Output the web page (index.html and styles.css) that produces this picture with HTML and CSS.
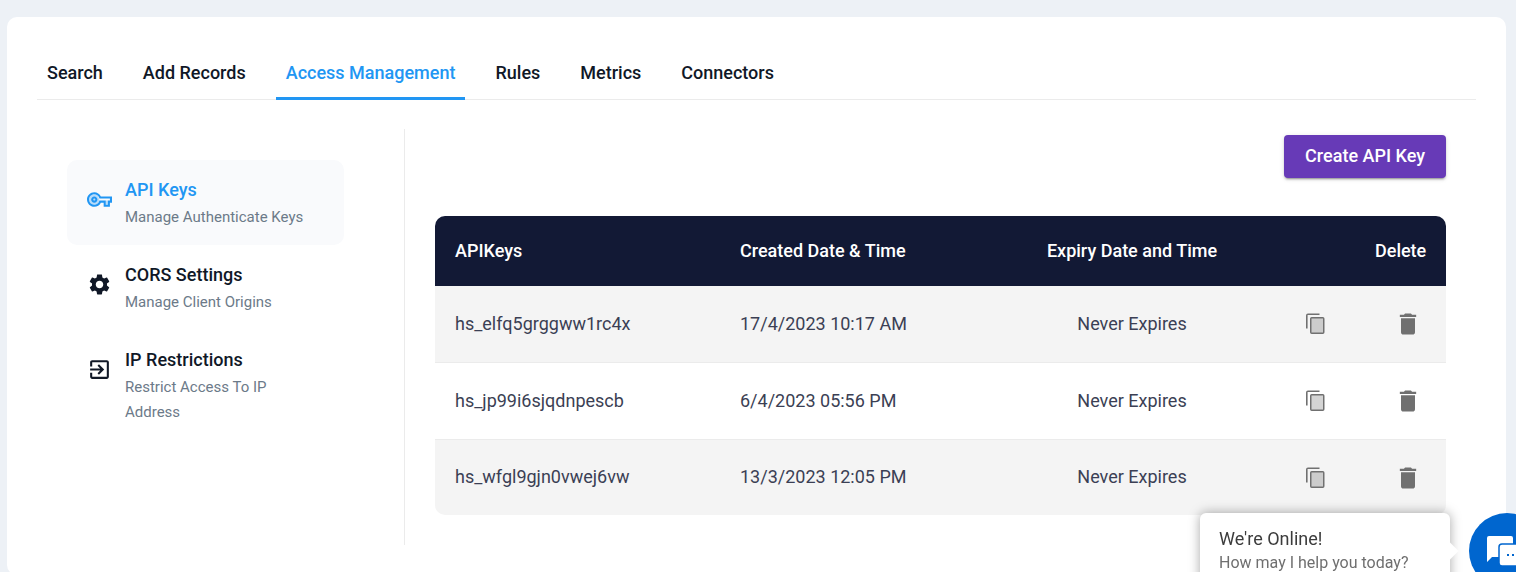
FILE: index.html
```html
<!DOCTYPE html>
<html lang="en">
<head>
	<meta charset="utf-8" />
	<title>Access Management</title>
	<link rel="stylesheet" href="styles.css">
</head>
<body>

<svg class="sprite" aria-hidden="true">
	<symbol id="icon-copy" viewBox="0 0 24 24">
		<path opacity=".3" d="M7 6h13v15H7z"/>
		<path d="M15.500 1.500H4a2 2 0 0 0-2 2V16.500h1.600V3.100h11.900zM18.800 5H7.700A1.700 1.700 0 0 0 6 6.700v13.600A1.700 1.700 0 0 0 7.700 22h11.100a1.700 1.700 0 0 0 1.700-1.700V6.700A1.700 1.700 0 0 0 18.800 5zm.2 15.500H7.500v-14H19z"/>
	</symbol>
	<symbol id="icon-trash" viewBox="0 0 24 24">
		<path d="M6 19c0 1.100.9 2 2 2h8c1.100 0 2-.9 2-2V7H6v12zM19 4h-3.500l-1-1h-5l-1 1H5v2h14V4z"/>
	</symbol>
</svg>

<div class="card">
	<nav class="tabs">
		<a href="#" class="tab">Search</a>
		<a href="#" class="tab">Add Records</a>
		<a href="#" class="tab active">Access Management</a>
		<a href="#" class="tab">Rules</a>
		<a href="#" class="tab">Metrics</a>
		<a href="#" class="tab">Connectors</a>
	</nav>

	<div class="content">
		<nav class="side">
			<a href="#" class="side-item active">
				<svg class="side-icon" viewBox="0 0 24 24" aria-hidden="true">
					<path opacity=".3" d="M22 13H11.940l-.23-.67C11.010 8.340 9.110 7 7 7c-2.760 0-5 2.240-5 5s2.240 5 5 5c2.110 0 4.010-1.340 4.710-3.330l.23-.67H18v4h2v-4h2z"/>
					<path d="M22 19h-6v-4h-2.680c-1.140 2.420-3.600 4-6.320 4-3.860 0-7-3.140-7-7s3.140-7 7-7c2.720 0 5.170 1.580 6.320 4H24v6h-2v4zm-4-2h2v-4h2v-2H11.940l-.23-.67C11.010 8.340 9.110 7 7 7c-2.760 0-5 2.240-5 5s2.240 5 5 5c2.110 0 4.010-1.340 4.710-3.330l.23-.67H18v4zM7 15c-1.650 0-3-1.350-3-3s1.350-3 3-3 3 1.350 3 3-1.350 3-3 3zm0-4c-.55 0-1 .45-1 1s.45 1 1 1 1-.45 1-1-.45-1-1-1z"/>
				</svg>
				<span class="side-text">
					<span class="side-title">API Keys</span>
					<span class="side-sub">Manage Authenticate Keys</span>
				</span>
			</a>
			<a href="#" class="side-item">
				<svg class="side-icon" viewBox="0 0 24 24" aria-hidden="true">
					<path d="M19.140 12.940c.04-.3.060-.61.060-.94 0-.32-.02-.64-.07-.94l2.030-1.580c.18-.14.230-.41.120-.61l-1.920-3.320c-.12-.22-.37-.29-.59-.22l-2.390.96c-.5-.38-1.030-.7-1.620-.94l-.36-2.540c-.04-.24-.24-.41-.48-.41h-3.840c-.24 0-.43.170-.47.410l-.36 2.540c-.59.240-1.130.570-1.620.940l-2.390-.96c-.22-.08-.47 0-.59.220L2.740 8.870c-.12.210-.08.470.12.610l2.030 1.580c-.05.3-.09.630-.09.940s.02.640.070.940l-2.030 1.580c-.18.140-.23.410-.12.610l1.920 3.320c.12.220.37.290.59.220l2.390-.96c.5.380 1.030.7 1.620.940l.36 2.540c.05.240.24.410.48.410h3.840c.24 0 .44-.17.470-.41l.36-2.540c.59-.24 1.130-.56 1.620-.94l2.390.96c.22.080.47 0 .59-.22l1.920-3.320c.12-.22.070-.47-.12-.61l-2.010-1.580zM12 15.600c-1.980 0-3.600-1.620-3.600-3.600s1.620-3.600 3.600-3.600 3.600 1.620 3.600 3.600-1.620 3.600-3.600 3.600z"/>
				</svg>
				<span class="side-text">
					<span class="side-title">CORS Settings</span>
					<span class="side-sub">Manage Client Origins</span>
				</span>
			</a>
			<a href="#" class="side-item">
				<svg class="side-icon" viewBox="0 0 24 24" aria-hidden="true">
					<path d="M10.090 15.590L11.500 17l5-5-5-5-1.410 1.410L12.670 11H3v2h9.670l-2.580 2.590zM19 3H5c-1.110 0-2 .9-2 2v4h2V5h14v14H5v-4H3v4c0 1.100.89 2 2 2h14c1.100 0 2-.9 2-2V5c0-1.100-.9-2-2-2z"/>
				</svg>
				<span class="side-text">
					<span class="side-title">IP Restrictions</span>
					<span class="side-sub">Restrict Access To IP Address</span>
				</span>
			</a>
		</nav>

		<main class="main">
			<button type="button" class="create-btn">Create API Key</button>

			<table class="keys">
				<colgroup>
					<col class="col-key">
					<col>
					<col class="col-expiry">
					<col class="col-copy">
					<col class="col-delete">
				</colgroup>
				<thead>
					<tr>
						<th>APIKeys</th>
						<th>Created Date &amp; Time</th>
						<th class="center">Expiry Date and Time</th>
						<th></th>
						<th>Delete</th>
					</tr>
				</thead>
				<tbody>
					<tr>
						<td>hs_elfq5grggww1rc4x</td>
						<td>17/4/2023 10:17 AM</td>
						<td class="center">Never Expires</td>
						<td class="copy"><button type="button" class="icon-btn" aria-label="Copy"><svg class="icon-copy"><use href="#icon-copy"/></svg></button></td>
						<td class="delete"><button type="button" class="icon-btn" aria-label="Delete"><svg class="icon-trash"><use href="#icon-trash"/></svg></button></td>
					</tr>
					<tr>
						<td>hs_jp99i6sjqdnpescb</td>
						<td>6/4/2023 05:56 PM</td>
						<td class="center">Never Expires</td>
						<td class="copy"><button type="button" class="icon-btn" aria-label="Copy"><svg class="icon-copy"><use href="#icon-copy"/></svg></button></td>
						<td class="delete"><button type="button" class="icon-btn" aria-label="Delete"><svg class="icon-trash"><use href="#icon-trash"/></svg></button></td>
					</tr>
					<tr>
						<td>hs_wfgl9gjn0vwej6vw</td>
						<td>13/3/2023 12:05 PM</td>
						<td class="center">Never Expires</td>
						<td class="copy"><button type="button" class="icon-btn" aria-label="Copy"><svg class="icon-copy"><use href="#icon-copy"/></svg></button></td>
						<td class="delete"><button type="button" class="icon-btn" aria-label="Delete"><svg class="icon-trash"><use href="#icon-trash"/></svg></button></td>
					</tr>
				</tbody>
			</table>
		</main>
	</div>
</div>

<!-- chat widget -->
<div class="chat">
	<div class="chat-bubble">
		<div class="chat-title">We're Online!</div>
		<div class="chat-sub">How may I help you today?</div>
	</div>
	<button type="button" class="chat-btn" aria-label="Open chat">
		<svg viewBox="0 0 76 76" aria-hidden="true">
			<path fill="#fff" d="M20 23h22a2 2 0 0 1 2 2v19H23l-5 5V25a2 2 0 0 1 2-2z"/>
			<path fill="#fff" stroke="#0066cf" stroke-width="1.5" d="M33 31h23a3 3 0 0 1 3 3v24l-6-5H33a3 3 0 0 1-3-3V34a3 3 0 0 1 3-3z"/>
			<path fill="#0066cf" d="M38 41h2v2h-2zM43 41h2v2h-2zM48 41h2v2h-2z"/>
		</svg>
	</button>
</div>

</body>
</html>
```
FILE: styles.css
```css
* {
	box-sizing: border-box;
	margin: 0;
	padding: 0;
}
body {
	min-height: 100vh;
	overflow: hidden;
	background: #edf1f6;
	font-family: Roboto, "Liberation Sans", sans-serif;
	font-size: 18px;
	color: #101827;
}
a {
	color: inherit;
	text-decoration: none;
}
button {
	border: 0;
	font-family: inherit;
	cursor: pointer;
}
.sprite {
	display: none;
}
.card {
	margin: 17px 10px 0 7px;
	padding: 30px;
	background: #fff;
	border-radius: 10px;
}

/* top tabs */
.tabs {
	display: flex;
	gap: 20px;
	height: 53px;
	border-bottom: 1px solid #ebebeb;
}
.tab {
	height: 53px;
	padding: 0 10px;
	line-height: 52px;
	font-weight: 500;
	border-bottom: 3px solid transparent;
}
.tab.active {
	color: #2196f3;
	border-bottom-color: #2196f3;
}

.content {
	display: flex;
	margin-top: 29px;
}

/* left menu */
.side {
	flex: 0 0 368px;
	min-height: 416px;
	padding: 31px 60px 30px 30px;
	border-right: 1px solid #ebebeb;
}
.side-item {
	display: flex;
	gap: 13px;
	padding: 16px 20px 15px;
	border-radius: 10px;
}
.side-item.active {
	background: #f9fafc;
}
.side-icon {
	flex: none;
	width: 25px;
	height: 25px;
	margin-top: 11px;
	fill: currentColor;
}
.side-title {
	display: block;
	line-height: 28px;
	font-weight: 500;
}
.side-sub {
	display: block;
	margin-top: 1px;
	line-height: 25px;
	font-size: 15px;
	color: #6c7a89;
}
.active .side-icon,
.active .side-title {
	color: #2196f3;
}

/* keys table */
.main {
	flex: 1;
	padding: 6px 30px 30px;
}
.create-btn {
	display: block;
	height: 43px;
	margin: 0 0 38px auto;
	padding: 0 21px 2px;
	border-radius: 4px;
	background: #673ab7;
	color: #fff;
	font-size: 18px;
	font-weight: 500;
	box-shadow: 0 3px 1px -2px rgba(0,0,0,.2), 0 2px 2px rgba(0,0,0,.14), 0 1px 5px rgba(0,0,0,.12);
}
.keys {
	width: 100%;
	table-layout: fixed;
	border-spacing: 0;
	border-radius: 10px;
	overflow: hidden;
}
.col-key {
	width: 285px;
}
.col-expiry {
	width: 290px;
}
.col-copy {
	width: 78px;
}
.col-delete {
	width: 91px;
}
.keys th {
	height: 70px;
	padding: 0 20px 2px;
	background: #121935;
	color: #fff;
	font-weight: 500;
	text-align: left;
}
.keys td {
	height: 77px;
	padding: 0 20px 2px;
	border-bottom: 1px solid #ebebeb;
	color: #3b3f54;
}
.keys tbody tr:nth-child(odd) {
	background: #f4f4f4;
}
.keys tbody tr:last-child td {
	height: 75px;
	border-bottom: 0;
}
.keys .center {
	text-align: center;
}
.keys .copy {
	padding: 0;
	text-align: center;
}
.keys .delete {
	padding: 0 24px 0 0;
	text-align: right;
}
.icon-btn {
	background: none;
	color: #707070;
	vertical-align: middle;
}
.icon-btn svg {
	display: block;
	fill: currentColor;
}
.icon-copy {
	width: 24px;
	height: 24px;
}
.icon-trash {
	width: 28px;
	height: 28px;
}

/* chat */
.chat {
	position: fixed;
	right: -29px;
	bottom: -17px;
	display: flex;
	gap: 19px;
}
.chat-bubble {
	position: relative;
	width: 250px;
	height: 76px;
	padding: 14px 19px;
	border-radius: 6px;
	background: #fff;
	box-shadow: 0 0 12px rgba(0,0,0,.35);
	line-height: 24px;
}
.chat-bubble:after {
	content: "";
	position: absolute;
	top: 32px;
	right: -6px;
	width: 12px;
	height: 12px;
	background: #fff;
	transform: rotate(45deg);
}
.chat-title {
	color: #3c3c3c;
}
.chat-sub {
	font-size: 16px;
	color: #6f6f6f;
}
.chat-btn {
	width: 76px;
	height: 76px;
	border-radius: 50%;
	background: #0066cf;
}
.chat-btn svg {
	display: block;
	width: 76px;
	height: 76px;
}
```
